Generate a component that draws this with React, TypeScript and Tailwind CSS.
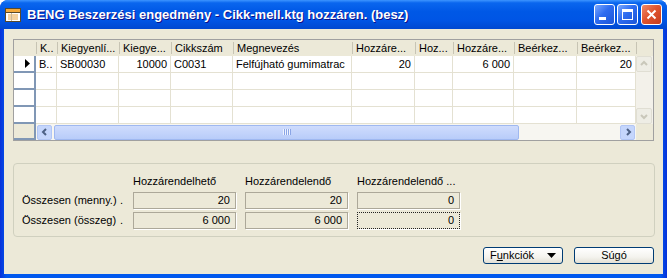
import React from "react";

const cols = [
  { w: 21, h: "K..", v: "B..", r: false },
  { w: 62, h: "Kiegyenlí...", v: "SB00030", r: false },
  { w: 52, h: "Kiegye...", v: "10000", r: true },
  { w: 62, h: "Cikkszám", v: "C0031", r: false },
  { w: 119, h: "Megnevezés", v: "Felfújható gumimatrac", r: false },
  { w: 63, h: "Hozzáre...", v: "20", r: true },
  { w: 38, h: "Hoz...", v: "", r: true },
  { w: 61, h: "Hozzáre...", v: "6 000", r: true },
  { w: 63, h: "Beérkez...", v: "", r: true },
  { w: 59, h: "Beérkez...", v: "20", r: true },
];

const TitleIcon = () => (
  <svg width="16" height="14" viewBox="0 0 16 14">
    <rect x="0.5" y="0.5" width="15" height="13" fill="#fff" stroke="#5a4a2a" />
    <rect x="1" y="1" width="14" height="3" fill="#f2a93b" />
    <line x1="1" y1="4.5" x2="15" y2="4.5" stroke="#5a4a2a" />
    <line x1="3" y1="7" x2="13" y2="7" stroke="#e9a640" />
    <line x1="3" y1="9" x2="13" y2="9" stroke="#e9a640" />
    <line x1="3" y1="11" x2="13" y2="11" stroke="#e9a640" />
    <line x1="6.5" y1="5" x2="6.5" y2="13" stroke="#c9b89a" />
  </svg>
);

const Chevron = ({ dir, color }: { dir: "l" | "r" | "u" | "d"; color: string }) => {
  const d = {
    l: "M5 1 L2 4 L5 7",
    r: "M3 1 L6 4 L3 7",
    u: "M1 5 L4 2 L7 5",
    d: "M1 3 L4 6 L7 3",
  }[dir];
  return (
    <svg width="8" height="8" viewBox="0 0 8 8">
      <path d={d} fill="none" stroke={color} strokeWidth="2" />
    </svg>
  );
};

const TitleButton = ({ kind }: { kind: "min" | "max" | "close" }) => {
  const bg =
    kind === "close"
      ? "bg-[linear-gradient(135deg,#f08a6a_0%,#e0552f_45%,#c83c1c_100%)]"
      : "bg-[linear-gradient(135deg,#7aa8ff_0%,#2e6cf0_45%,#1b55d8_100%)]";
  return (
    <div className={`w-[21px] h-[21px] rounded-[3px] border border-white flex items-center justify-center ${bg}`}>
      {kind === "min" && <div className="w-[7px] h-[3px] bg-white self-end mb-[4px] mr-[5px]" />}
      {kind === "max" && <div className="w-[11px] h-[11px] border-white border border-t-[3px]" />}
      {kind === "close" && (
        <svg width="11" height="11" viewBox="0 0 11 11">
          <path d="M1.5 1.5 L9.5 9.5 M9.5 1.5 L1.5 9.5" stroke="#fff" strokeWidth="2" />
        </svg>
      )}
    </div>
  );
};

const Cell = ({ w, children, right }: { w: number; children?: React.ReactNode; right?: boolean }) => (
  <div
    style={{ width: w }}
    className={`shrink-0 h-full border-r border-b border-[#e4e1d2] bg-white px-[3px] flex items-center whitespace-nowrap overflow-hidden ${
      right ? "justify-end" : ""
    }`}
  >
    {children}
  </div>
);

const Box = ({ children, focus }: { children: React.ReactNode; focus?: boolean }) => (
  <div
    className={`w-[103px] shrink-0 ml-[9px] h-[17px] border shadow-[1px_1px_0_#ffffff] flex items-center justify-end pr-[5px] ${
      focus ? "border-dotted border-[#222]" : "border-[#aca899]"
    }`}
  >
    {children}
  </div>
);

const XpButton = ({ children }: { children: React.ReactNode }) => (
  <div className="w-[80px] h-[17px] rounded-[3px] border border-[#003c74] bg-[linear-gradient(to_bottom,#ffffff_0%,#f4f3ee_60%,#e3e0d5_100%)] flex items-center justify-center">
    {children}
  </div>
);

export default function App() {
  const rows = [0, 1, 2, 3];
  return (
    <div className="w-[667px] h-[278px] bg-white font-['Liberation_Sans',sans-serif] text-[11px] text-black">
      <div className="w-full h-full rounded-t-[8px] overflow-hidden flex flex-col bg-[linear-gradient(to_right,#0831d9_0%,#0058ee_1%,#0058ee_99%,#0831d9_100%)]">
        {/* title bar */}
        <div className="h-[29px] shrink-0 flex items-center pl-[5px] pr-[5px] bg-[linear-gradient(to_bottom,#3d95ff_0%,#0a66ee_10%,#0058e6_40%,#0055e5_70%,#0048d0_100%)]">
          <TitleIcon />
          <span className="ml-[6px] text-white font-bold text-[13px] [text-shadow:1px_1px_#0f1089] whitespace-nowrap">
            BENG Beszerzési engedmény - Cikk-mell.ktg hozzáren. (besz)
          </span>
          <div className="ml-auto flex items-center">
            <TitleButton kind="min" />
            <div className="w-[2px]" />
            <TitleButton kind="max" />
            <div className="w-[3px]" />
            <TitleButton kind="close" />
          </div>
        </div>

        {/* body */}
        <div className="flex-1 mx-[4px] mb-[4px] bg-[#ece9d8] flex flex-col px-[9px] pt-[10px]">
          {/* grid */}
          <div className="h-[102px] w-[641px] border border-[#a0a0a0] flex flex-col bg-[#ece9d8]">
            {/* header */}
            <div className="h-[16px] flex shrink-0">
              <div className="w-[22px] shrink-0" />
              {cols.map((c, i) => (
                <div key={i} style={{ width: c.w }} className="shrink-0 flex items-center whitespace-nowrap overflow-hidden">
                  <div className="w-px h-[12px] bg-[#c7c4b4] shrink-0" />
                  <span className="pl-[3px]">{c.h}</span>
                </div>
              ))}
              <div className="w-px h-[12px] bg-[#c7c4b4] self-center" />
            </div>
            {/* data rows */}
            <div className="flex">
              <div className="flex flex-col">
                {rows.map((r) => (
                  <div key={r} className="h-[17px] flex">
                    <div className="w-[22px] h-full bg-white border-r-2 border-b-2 border-[#8097b5] flex items-center justify-end pr-[4px]">
                      {r === 0 && (
                        <svg width="5" height="9" viewBox="0 0 5 9">
                          <path d="M0 0 L5 4.5 L0 9 Z" fill="#000" />
                        </svg>
                      )}
                    </div>
                    {cols.map((c, i) => (
                      <Cell key={i} w={c.w} right={c.r}>
                        {r === 0 ? c.v : ""}
                      </Cell>
                    ))}
                  </div>
                ))}
              </div>
              {/* vertical scrollbar (disabled) */}
              <div className="w-[17px] h-[68px] bg-[#f3f1ea] flex flex-col justify-between">
                <div className="h-[16px] w-[16px] rounded-[2px] bg-[#eeede5] border border-[#e0ded3] flex items-center justify-center">
                  <Chevron dir="u" color="#c9c7ba" />
                </div>
                <div className="h-[16px] w-[16px] rounded-[2px] bg-[#eeede5] border border-[#e0ded3] flex items-center justify-center">
                  <Chevron dir="d" color="#c9c7ba" />
                </div>
              </div>
            </div>
            {/* horizontal scrollbar row */}
            <div className="flex-1 flex">
              <div className="w-[22px] h-full bg-[#ece9d8] border-r-2 border-b-2 border-[#8097b5]" />
              <div className="w-[600px] h-full bg-[#f7f6f1] flex items-center px-[1px] gap-[2px]">
                <div className="w-[15px] h-[15px] rounded-[2px] bg-[#c5d6fc] border border-[#b2c6f5] flex items-center justify-center">
                  <Chevron dir="l" color="#4d6185" />
                </div>
                <div className="w-[465px] h-[15px] rounded-[2px] bg-[linear-gradient(to_bottom,#cfdcfd,#b8ccf9)] border border-[#9fb8f0] flex items-center justify-center">
                  <div className="flex gap-[1px]">
                    {[0, 1, 2, 3].map((k) => (
                      <div key={k} className="w-px h-[6px] bg-[#eef3fe] shadow-[1px_0_0_#8aa5e6]" />
                    ))}
                  </div>
                </div>
                <div className="flex-1" />
                <div className="w-[15px] h-[15px] rounded-[2px] bg-[#c5d6fc] border border-[#b2c6f5] flex items-center justify-center">
                  <Chevron dir="r" color="#4d6185" />
                </div>
              </div>
              <div className="flex-1 bg-[#ece9d8]" />
            </div>
          </div>

          {/* summary group */}
          <div className="mt-[22px] h-[74px] w-[642px] border border-[#d0d0bf] rounded-[4px] pt-[11px] pl-[8px] flex flex-col">
            <div className="h-[13px] flex items-center whitespace-nowrap">
              <div className="w-[111px] shrink-0" />
              <div className="w-[103px] shrink-0">Hozzárendelhető</div>
              <div className="w-[103px] shrink-0 ml-[9px]">Hozzárendelendő</div>
              <div className="w-[103px] shrink-0 ml-[9px]">Hozzárendelendő ...</div>
            </div>
            <div className="mt-[4px] h-[17px] flex items-center whitespace-nowrap">
              <div className="w-[102px] shrink-0 flex items-center">
                <span className="w-[98px] shrink-0">Összesen (menny.)</span>
                <span>.</span>
              </div>
              <Box>20</Box>
              <Box>20</Box>
              <Box>0</Box>
            </div>
            <div className="mt-[3px] h-[17px] flex items-center whitespace-nowrap">
              <div className="w-[102px] shrink-0 flex items-center">
                <span className="w-[98px] shrink-0">Összesen (összeg)</span>
                <span>.</span>
              </div>
              <Box>6 000</Box>
              <Box>6 000</Box>
              <Box focus>0</Box>
            </div>
          </div>

          {/* buttons */}
          <div className="mt-[10px] flex justify-end gap-[11px]">
            <XpButton>
              <span className="ml-[6px]">
                F<span className="underline">u</span>nkciók
              </span>
              <svg width="9" height="5" viewBox="0 0 9 5" className="ml-auto mr-[6px]">
                <path d="M0 0 L9 0 L4.5 5 Z" fill="#000" />
              </svg>
            </XpButton>
            <XpButton>Súgó</XpButton>
          </div>
        </div>
      </div>
    </div>
  );
}
